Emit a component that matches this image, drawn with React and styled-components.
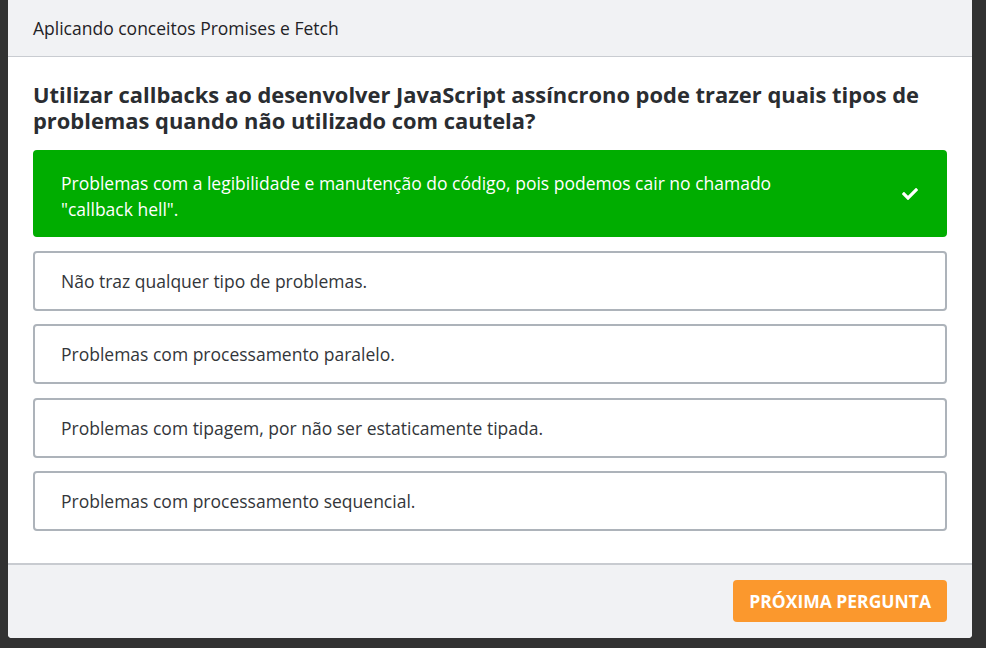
import React from 'react'
import styled, { createGlobalStyle } from 'styled-components'
import { FaCheck } from 'react-icons/fa'

const GlobalStyle = createGlobalStyle`
  html, body {
    margin: 0;
    padding: 0;
    background: #323232;
    font-family: "Open Sans", "Liberation Sans", sans-serif;
  }
  * { box-sizing: border-box; }
`

const Page = styled.div`
  width: 986px;
  height: 648px;
  padding-left: 8px;
`

const Modal = styled.div`
  width: 964px;
  height: 638px;
  background: #fff;
  border-radius: 0 0 4px 4px;
  display: flex;
  flex-direction: column;
  overflow: hidden;
`

const Header = styled.div`
  height: 57px;
  background: #f1f2f4;
  border-bottom: 1px solid #c9ccd1;
  display: flex;
  align-items: center;
  padding: 0 25px 1px;
  font-size: 17.5px;
  color: #1f2226;
`

const Body = styled.div`
  flex: 1;
  padding: 25px 25px 0;
`

const Question = styled.h2`
  margin: 0 0 16px;
  font-size: 21.9px;
  line-height: 26px;
  font-weight: 700;
  color: #2a2d31;
`

const Options = styled.div`
  display: flex;
  flex-direction: column;
  gap: 13.5px;
`

const Option = styled.div`
  display: flex;
  align-items: center;
  gap: 20px;
  border: 2px solid ${({ correct }) => (correct ? '#00ad00' : '#adb3ba')};
  background: ${({ correct }) => (correct ? '#00ad00' : '#fff')};
  color: ${({ correct }) => (correct ? '#fff' : '#33363a')};
  border-radius: 4px;
  padding: ${({ correct }) => (correct ? '18px 27px 13px 26px' : '16px 26px 16px')};
  font-size: 17.5px;
  line-height: ${({ correct }) => (correct ? '26px' : '24px')};
`

const OptionText = styled.span`
  flex: 1;
  max-width: 745px;
`

const Check = styled.span`
  margin-left: auto;
  margin-top: -4px;
  display: flex;
  align-items: center;
`

const Footer = styled.div`
  height: 75px;
  background: #f1f2f4;
  border-top: 2px solid #c8cbd0;
  display: flex;
  justify-content: flex-end;
  align-items: center;
  padding: 0 25px 1px;
`

const NextButton = styled.button`
  height: 42px;
  padding: 0 16px;
  border: none;
  border-radius: 4px;
  background: #fb982d;
  color: #fff;
  font-family: "Open Sans", "Liberation Sans", sans-serif;
  font-size: 17.5px;
  font-weight: 700;
  text-transform: uppercase;
  cursor: pointer;
`

const options = [
  { text: 'Problemas com a legibilidade e manutenção do código, pois podemos cair no chamado "callback hell".', correct: true },
  { text: 'Não traz qualquer tipo de problemas.' },
  { text: 'Problemas com processamento paralelo.' },
  { text: 'Problemas com tipagem, por não ser estaticamente tipada.' },
  { text: 'Problemas com processamento sequencial.' },
]

const App = () => {
  return (
    <>
      <GlobalStyle />
      <Page>
        <Modal>
          <Header>Aplicando conceitos Promises e Fetch</Header>
          <Body>
            <Question>
              Utilizar callbacks ao desenvolver JavaScript assíncrono pode trazer quais tipos de problemas quando não utilizado com cautela?
            </Question>
            <Options>
              {options.map((o, i) => (
                <Option key={i} correct={o.correct}>
                  <OptionText>{o.text}</OptionText>
                  {o.correct && (
                    <Check>
                      <FaCheck size={16} />
                    </Check>
                  )}
                </Option>
              ))}
            </Options>
          </Body>
          <Footer>
            <NextButton>Próxima pergunta</NextButton>
          </Footer>
        </Modal>
      </Page>
    </>
  )
}

export default App
